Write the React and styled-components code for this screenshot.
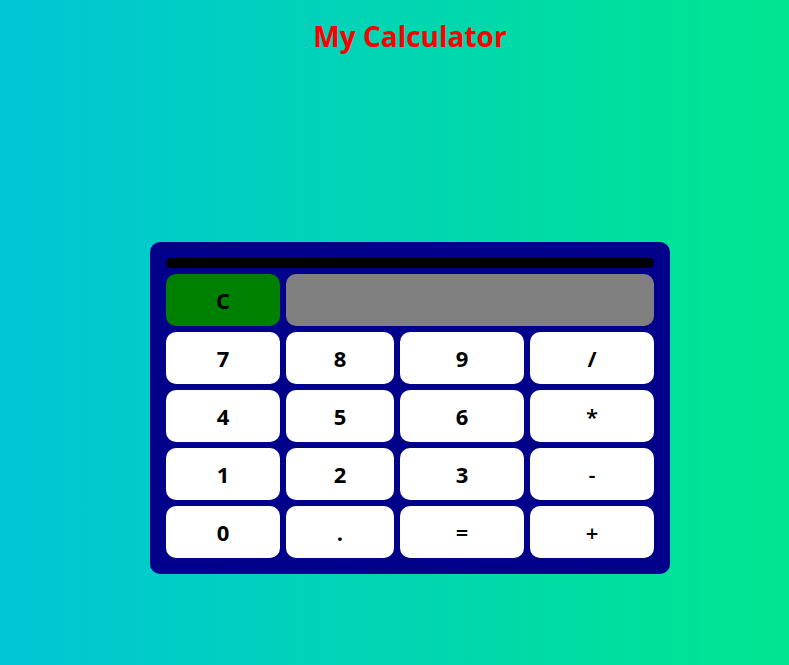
import React, { useState } from "react";
import styled, { createGlobalStyle } from "styled-components";

const GlobalStyle = createGlobalStyle`
  html, body {
    margin: 0;
    padding: 0;
    min-height: 100%;
  }
  body {
    background: linear-gradient(to right, #00c6d6, #00e58f);
    font-family: "Open Sans", "Noto Sans", sans-serif;
    min-height: 665px;
  }
`;

const keys = ["7", "8", "9", "/", "4", "5", "6", "*", "1", "2", "3", "-", "0", ".", "=", "+"];

const App = () => {
  const [value, setValue] = useState("");

  const press = (k) => {
    if (k === "=") {
      try {
        // eslint-disable-next-line no-new-func
        setValue(String(Function(`return (${value})`)()));
      } catch (e) {
        setValue("Error");
      }
      return;
    }
    setValue(value + k);
  };

  return (
    <Page>
      <GlobalStyle />
      <Title>My Calculator</Title>
      <Calc>
        <Bar />
        <Grid>
          <Key color="#008000" onClick={() => setValue("")}>C</Key>
          <Display>{value}</Display>
          {keys.map((k) => (
            <Key key={k} light={"+-*=".includes(k)} onClick={() => press(k)}>
              {k}
            </Key>
          ))}
        </Grid>
      </Calc>
    </Page>
  );
};

export default App;

const Page = styled.div`
  display: flex;
  flex-direction: column;
  align-items: center;
  padding-left: 31px;
`;

const Title = styled.h1`
  margin: 17px 0 0;
  color: #ff0000;
  font-size: 28px;
  font-weight: 700;
  line-height: 38px;
`;

const Calc = styled.div`
  margin-top: 187px;
  width: 488px;
  padding: 16px;
  background: #00008b;
  border-radius: 10px;
`;

const Bar = styled.div`
  height: 10px;
  background: #000;
  border-radius: 5px;
  margin-bottom: 6px;
`;

const Grid = styled.div`
  display: grid;
  grid-template-columns: 114px 108px 124px 124px;
  grid-auto-rows: 52px;
  gap: 6px;
`;

const Key = styled.button`
  border: none;
  border-radius: 10px;
  background: ${(p) => p.color || "#fff"};
  color: #000;
  font-family: "Open Sans", "Noto Sans", sans-serif;
  font-size: 22px;
  font-weight: ${(p) => (p.light ? 600 : 700)};
  padding: 0;
  cursor: pointer;
`;

const Display = styled.div`
  grid-column: span 3;
  background: #808080;
  border-radius: 10px;
  display: flex;
  align-items: center;
  justify-content: flex-end;
  padding: 0 14px;
  font-size: 24px;
  font-weight: 700;
  color: #000;
`;
